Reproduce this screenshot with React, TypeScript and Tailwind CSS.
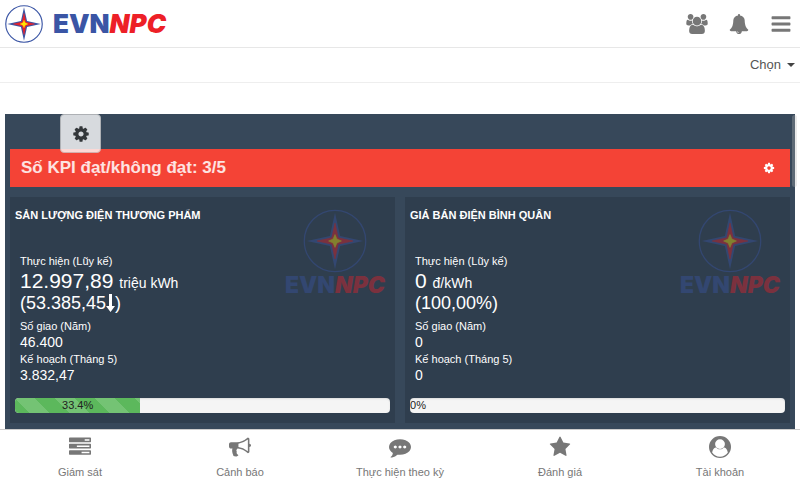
import type { ReactNode } from "react";

const PATHS = {
  users: "M593 896q-162 5-265 128H194q-82 0-138-40.5T0 865q0-353 124-353 6 0 43.5 21t97.5 42.5T384 597q67 0 133-23-5 37-5 66 0 139 81 256zm1071 637q0 120-73 189.5t-194 69.5H523q-121 0-194-69.5T256 1533q0-53 3.5-103.5t14-109T300 1212t43-97.5 62-81 85.5-53.5T602 960q10 0 43 21.5t73 48 107 48 135 21.5 135-21.5 107-48 73-48 43-21.5q61 0 111.5 20t85.5 53.5 62 81 43 97.5 26.5 108.5 14 109 3.5 103.5zM640 256q0 106-75 181t-181 75-181-75-75-181 75-181T384 0t181 75 75 181zm704 384q0 159-112.5 271.5T960 1024 688.5 911.5 576 640t112.5-271.5T960 256t271.5 112.5T1344 640zm576 225q0 78-56 118.5t-138 40.5h-134q-103-123-265-128 81-117 81-256 0-29-5-66 66 23 133 23 59 0 119-21.5t97.5-42.5 43.5-21q124 0 124 353zm-128-609q0 106-75 181t-181 75-181-75-75-181 75-181 181-75 181 75 75 181z",
  bell: "M912 1696q0-16-16-16-59 0-101.5-42.5T752 1536q0-16-16-16t-16 16q0 73 51.5 124.5T896 1712q16 0 16-16zm816-288q0 52-38 90t-90 38h-448q0 106-75 181t-181 75-181-75-75-181H192q-52 0-90-38t-38-90q50-42 91-88t85-119.5 74.5-158.5 50-206T384 576q0-152 117-282.5T808 135q-8-19-8-39 0-40 28-68t68-28 68 28 28 68q0 20-8 39 190 28 307 158.5T1408 576q0 139 19.5 260t50 206 74.5 158.5 85 119.5 91 88z",
  bars: "M1664 1344v128q0 26-19 45t-45 19H192q-26 0-45-19t-19-45v-128q0-26 19-45t45-19h1408q26 0 45 19t19 45zm0-512v128q0 26-19 45t-45 19H192q-26 0-45-19t-19-45V832q0-26 19-45t45-19h1408q26 0 45 19t19 45zm0-512v128q0 26-19 45t-45 19H192q-26 0-45-19t-19-45V320q0-26 19-45t45-19h1408q26 0 45 19t19 45z",
  cog: "M1152 896q0-106-75-181t-181-75-181 75-75 181 75 181 181 75 181-75 75-181zm512-109v222q0 12-8 23t-20 13l-185 28q-19 54-39 91 35 50 107 138 10 12 10 25t-9 23q-27 37-99 108t-94 71q-12 0-26-9l-138-108q-44 23-91 38-16 136-29 186-7 28-36 28H785q-14 0-24.5-8.5T749 1634l-28-184q-49-16-90-37l-141 107q-10 9-25 9-14 0-25-11-126-114-165-168-7-10-7-23 0-12 8-23 15-21 51-66.5t54-70.5q-27-50-41-99l-183-27q-13-2-21-12.5t-8-23.5V783q0-12 8-23t19-13l186-28q14-46 39-92-40-57-107-138-10-12-10-24 0-10 9-23 26-36 98.5-107.5T465 263q13 0 26 10l138 107q44-23 91-38 16-136 29-186 7-28 36-28h222q14 0 24.5 8.5T1043 158l28 184q49 16 90 37l142-107q9-9 24-9 13 0 25 10 129 119 165 170 7 8 7 22 0 12-8 23-15 21-51 66.5t-54 70.5q26 50 41 98l183 28q13 2 21 12.5t8 23.5z",
  tasks: "M1024 1408h640v-128h-640v128zm-384-512h1024V768H640v128zm640-512h384V256h-384v128zm512 832v256q0 26-19 45t-45 19H64q-26 0-45-19t-19-45v-256q0-26 19-45t45-19h1664q26 0 45 19t19 45zm0-512v256q0 26-19 45t-45 19H64q-26 0-45-19T0 960V704q0-26 19-45t45-19h1664q26 0 45 19t19 45zm0-512v256q0 26-19 45t-45 19H64q-26 0-45-19T0 448V192q0-26 19-45t45-19h1664q26 0 45 19t19 45z",
  bullhorn: "M1664 640q53 0 90.5 37.5T1792 768t-37.5 90.5T1664 896v384q0 52-38 90t-90 38q-417-347-812-380-58 19-91 66t-31 100.5 40 92.5q-20 33-23 65.5t6 58 33.5 55 48 50T768 1561q-29 58-111.5 83t-168.5 11.5T356 1600q-7-23-29.5-87.5t-32-94.5-23-89-15-101 3.5-98.5 22-110.5H160q-66 0-113-47T0 864V672q0-66 47-113t113-47h480q435 0 896-384 52 0 90 38t38 90v384zm-128 604V292q-394 302-768 343v270q377 42 768 339z",
  comment: "M640 896q0-53-37.5-90.5T512 768t-90.5 37.5T384 896t37.5 90.5T512 1024t90.5-37.5T640 896zm384 0q0-53-37.5-90.5T896 768t-90.5 37.5T768 896t37.5 90.5T896 1024t90.5-37.5T1024 896zm384 0q0-53-37.5-90.5T1280 768t-90.5 37.5T1152 896t37.5 90.5 90.5 37.5 90.5-37.5T1408 896zm384 0q0 174-120 321.5t-326 233-450 85.5q-110 0-211-18-173 173-435 229-52 10-86 13-12 1-22-6t-13-18q-4-15 20-37 5-5 23.5-21.5T198 1655t23.5-25.5 24-31.5 20.5-37 20-48 14.5-57.5T313 1383q-146-90-229.5-216.5T0 896q0-174 120-321.5t326-233T896 256t450 85.5 326 233T1792 896z",
  star: "M1728 647q0 22-26 48l-363 354 86 500q1 7 1 20 0 21-10.5 35.5T1385 1619q-19 0-40-12l-449-236-449 236q-22 12-40 12-21 0-31.5-14.5T365 1569q0-6 2-20l86-500L89 695q-25-27-25-48 0-37 56-46l502-73L847 73q19-41 49-41t49 41l225 455 502 73q56 9 56 46z",
  user: "M896 0a896 896 0 1 1 0 1792a896 896 0 1 1 0-1792zm0 1680c270 0 500-120 640-340-66-327-215-412-326-412-80 100-190 160-314 160s-234-60-314-160c-111 0-260 85-326 412 140 220 370 340 640 340zm400-1020a400 400 0 1 0-800 0a400 400 0 1 0 800 0z",
};

type IconName = keyof typeof PATHS;

function Icon({ name, className }: { name: IconName; className: string }) {
  return (
    <svg
      viewBox={name === "users" ? "0 0 1920 1792" : "0 0 1792 1792"}
      className={className}
      fill="currentColor"
      fillRule="evenodd"
      aria-hidden="true"
    >
      <path d={PATHS[name]} />
    </svg>
  );
}

function Emblem({ className, ring }: { className: string; ring: number }) {
  return (
    <svg viewBox="0 0 100 100" className={className} aria-hidden="true">
      <circle cx="50" cy="50" r="48" fill="none" stroke="#3a55a5" strokeWidth={ring} />
      <path d="M50 6L58 42L94 50L58 58L50 94L42 58L6 50L42 42Z" fill="#3a55a5" />
      <path d="M50 22L55 45L78 50L55 55L50 78L45 55L22 50L45 45Z" fill="#ed2027" stroke="#ed2027" strokeWidth="1" />
      <path d="M50 40L53 47L60 50L53 53L50 60L47 53L40 50L47 47Z" fill="#ffe600" stroke="#ffe600" strokeWidth="1" />
    </svg>
  );
}

function Wordmark({ className }: { className: string }) {
  return (
    <span className={`font-['Inter',sans-serif] font-black text-[#3a55a5] ${className}`}>
      EVN<span className="text-[#ed2027] italic">NPC</span>
    </span>
  );
}

interface Kpi {
  title: string;
  value: string;
  unit: string;
  compare: ReactNode;
  assigned: string;
  planned: string;
  percent: number;
}

const DownArrow = () => (
  <svg viewBox="0 0 9 18" className="inline-block h-[18px] w-[9px] align-[-3px]" fill="currentColor" aria-label="giảm">
    <path d="M3 0h3v12h3L4.5 18L0 12h3z" />
  </svg>
);

const KPIS: Kpi[] = [
  { title: "SẢN LƯỢNG ĐIỆN THƯƠNG PHẨM", value: "12.997,89", unit: "triệu kWh", compare: <>53.385,45<DownArrow /></>, assigned: "46.400", planned: "3.832,47", percent: 33.4 },
  { title: "GIÁ BÁN ĐIỆN BÌNH QUÂN", value: "0", unit: "đ/kWh", compare: "100,00%", assigned: "0", planned: "0", percent: 0 },
];

function KpiCard({ kpi }: { kpi: Kpi }) {
  return (
    <article className="relative min-w-0 flex-1 bg-[#2f3e4e] px-[5px] pt-2 pb-2.5">
      <h2 className="text-[11px] leading-5 font-bold">{kpi.title}</h2>
      <div className="absolute top-3 right-2.5 flex flex-col items-center opacity-40">
        <Emblem className="size-16" ring={2} />
        <Wordmark className="text-[23px] leading-6" />
      </div>
      <dl className="mt-7 px-[5px]">
        <dt className="text-[11px] leading-4">Thực hiện (Lũy kế)</dt>
        <dd className="text-[21px] leading-6">
          {kpi.value} <span className="text-sm">{kpi.unit}</span>
        </dd>
        <dd className="text-lg leading-5">({kpi.compare})</dd>
        <dt className="mt-[5px] text-[11px] leading-4">Số giao (Năm)</dt>
        <dd className="text-sm leading-[17px]">{kpi.assigned}</dd>
        <dt className="text-[11px] leading-4">Kế hoạch (Tháng 5)</dt>
        <dd className="text-sm leading-[17px]">{kpi.planned}</dd>
      </dl>
      <div
        role="progressbar"
        aria-label={kpi.title}
        aria-valuenow={kpi.percent}
        className="mt-3.5 h-[15px] overflow-hidden rounded bg-[#f5f5f5] text-[11px] leading-[15px] text-[#222] shadow-[inset_0_1px_2px_rgba(0,0,0,.1)]"
      >
        <div
          className="h-full bg-[#5cb85c] bg-[linear-gradient(45deg,rgba(255,255,255,.15)_25%,transparent_25%,transparent_50%,rgba(255,255,255,.15)_50%,rgba(255,255,255,.15)_75%,transparent_75%,transparent)] bg-[length:40px_40px] text-center whitespace-nowrap"
          style={{ width: `${kpi.percent}%` }}
        >
          {kpi.percent}%
        </div>
      </div>
    </article>
  );
}

const TABS: { label: string; icon: IconName }[] = [
  { label: "Giám sát", icon: "tasks" },
  { label: "Cảnh báo", icon: "bullhorn" },
  { label: "Thực hiện theo kỳ", icon: "comment" },
  { label: "Đánh giá", icon: "star" },
  { label: "Tài khoản", icon: "user" },
];

export default function App() {
  return (
    <div className="flex h-screen flex-col overflow-hidden bg-white font-['Liberation_Sans',Arial,sans-serif] text-white">
      <header className="flex h-12 shrink-0 items-center justify-between border-b border-[#e7e7e7] pr-2 pl-[5px]">
        <a href="#" className="flex items-center gap-2.5" aria-label="EVNNPC">
          <Emblem className="size-[38px]" ring={3} />
          <Wordmark className="text-[26px] leading-8" />
        </a>
        <div className="flex items-center gap-[21px] text-[#777]">
          <button type="button" aria-label="Nhóm"><Icon name="users" className="h-5 w-[22px]" /></button>
          <button type="button" aria-label="Thông báo"><Icon name="bell" className="size-5" /></button>
          <button type="button" aria-label="Menu"><Icon name="bars" className="size-[22px]" /></button>
        </div>
      </header>

      <div className="flex h-[35px] shrink-0 items-center justify-end border-b border-[#eee] pr-[5px]">
        <button type="button" className="flex items-center gap-1.5 text-[13px] leading-5 text-[#555]">
          Chọn
          <span className="border-x-4 border-t-4 border-x-transparent border-t-[#444]" />
        </button>
      </div>

      <main className="relative mx-[5px] mt-[31px] min-h-0 flex-1 overflow-hidden bg-[#37485a] px-[5px]">
        <button
          type="button"
          aria-label="Cài đặt"
          className="absolute top-0 left-[55px] flex h-[39px] w-[41px] items-center justify-center rounded-sm border border-[#ccc] bg-white text-[#333] opacity-80"
        >
          <Icon name="cog" className="size-[18px]" />
        </button>
        <section className="mt-[35px] flex h-[38px] items-center justify-between bg-[#f44336] pr-[15px] pl-[11px]">
          <h1 className="text-[17px] leading-6 font-bold text-white/85">Số KPI đạt/không đạt: 3/5</h1>
          <button type="button" aria-label="Cấu hình KPI"><Icon name="cog" className="size-3" /></button>
        </section>
        <div className="mt-2.5 flex gap-2.5">
          {KPIS.map((kpi) => <KpiCard key={kpi.title} kpi={kpi} />)}
        </div>
      </main>
      <div className="absolute top-[115px] right-[3px] h-[72px] w-[5px] rounded-full bg-[#bbb]/30" />

      <nav className="flex h-[51px] shrink-0 border-t border-[#ccc] bg-white text-[#777]">
        {TABS.map((tab) => (
          <a key={tab.label} href="#" className="flex flex-1 flex-col items-center pt-1.5">
            <Icon name={tab.icon} className="size-[22px]" />
            <span className="mt-1.5 text-[11px] leading-4">{tab.label}</span>
          </a>
        ))}
      </nav>
    </div>
  );
}
